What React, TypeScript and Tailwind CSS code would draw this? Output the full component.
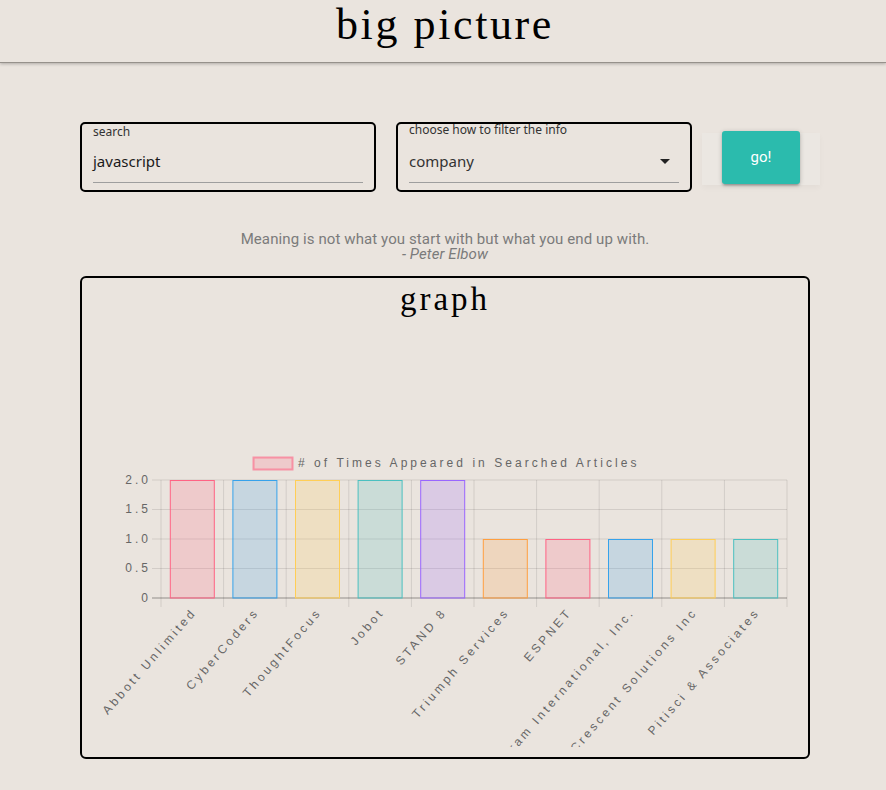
import React from "react";

const labels = [
  "Abbott Unlimited",
  "CyberCoders",
  "ThoughtFocus",
  "Jobot",
  "STAND 8",
  "Triumph Services",
  "ESPNET",
  "Sogram International, Inc.",
  "Crescent Solutions Inc",
  "Pitisci & Associates",
];
const values = [2, 2, 2, 2, 2, 1, 1, 1, 1, 1];
const colors = [
  [255, 99, 132],
  [54, 162, 235],
  [255, 206, 86],
  [75, 192, 192],
  [153, 102, 255],
  [255, 159, 64],
  [255, 99, 132],
  [54, 162, 235],
  [255, 206, 86],
  [75, 192, 192],
];

const X0 = 161;
const X1 = 787;
const CW = (X1 - X0) / 10;
const Y0 = 598;
const UNIT = 59;

function Chart() {
  const font = "'Liberation Sans', Arial, sans-serif";
  return (
    <svg width={726} height={417} viewBox="82 330 726 417" className="block">
      {/* legend */}
      <rect x={253.5} y={457.5} width={39} height={12} fill="rgba(255,99,132,0.2)" stroke="rgba(255,99,132,0.6)" strokeWidth={2} />
      <text x={298} y={463.5} fontSize={12} fill="#666" fontFamily={font} dominantBaseline="middle" style={{ letterSpacing: "3.05px" }}>
        # of Times Appeared in Searched Articles
      </text>
      {/* horizontal grid */}
      {[2, 1.5, 1, 0.5].map((v) => (
        <line key={v} x1={152} x2={X1} y1={Y0 - v * UNIT} y2={Y0 - v * UNIT} stroke="rgba(0,0,0,0.1)" strokeWidth={1} />
      ))}
      {/* vertical grid */}
      {Array.from({ length: 11 }).map((_, i) => (
        <line key={i} x1={X0 + i * CW} x2={X0 + i * CW} y1={480} y2={607} stroke="rgba(0,0,0,0.1)" strokeWidth={1} />
      ))}
      <line x1={152} x2={X1} y1={Y0} y2={Y0} stroke="rgba(0,0,0,0.25)" strokeWidth={1.5} />
      {/* y labels */}
      {[
        [2, "2.0"],
        [1.5, "1.5"],
        [1, "1.0"],
        [0.5, "0.5"],
        [0, "0"],
      ].map(([v, t]) => (
        <text key={t as string} x={151} y={Y0 - (v as number) * UNIT + 0.5} textAnchor="end" dominantBaseline="middle" fontSize={12} fill="#666" fontFamily={font} style={{ letterSpacing: "3px" }}>
          {t}
        </text>
      ))}
      {/* bars */}
      {values.map((v, i) => {
        const cx = X0 + CW * i + CW / 2;
        const [r, g, b] = colors[i];
        const top = Y0 - v * UNIT;
        return (
          <rect
            key={i}
            x={cx - 22}
            y={top + 0.5}
            width={44}
            height={Y0 - top - 0.5}
            fill={`rgba(${r},${g},${b},0.2)`}
            stroke={`rgb(${r},${g},${b})`}
            strokeWidth={1}
          />
        );
      })}
      {/* x labels */}
      {labels.map((l, i) => {
        const cx = X0 + CW * i + CW / 2;
        return (
          <text
            key={l}
            transform={`translate(${cx + 1} 612) rotate(-49)`}
            x={2}
            y={0}
            textAnchor="end"
            dominantBaseline="middle"
            fontSize={12}
            fill="#666"
            fontFamily={font}
            style={{ letterSpacing: "3px" }}
          >
            {l}
          </text>
        );
      })}
    </svg>
  );
}

export default function App() {
  return (
    <div className="min-h-[790px] w-full bg-[#eae4de] font-['Roboto',sans-serif]">
      <header className="h-[63px] border-b border-[#96918b] shadow-[0_1px_3px_rgba(0,0,0,0.25)] flex justify-center pt-[3px]">
        <h1 className="font-['Liberation_Serif',serif] text-[44px] leading-none tracking-[2.6px] text-black pl-[4px]">big picture</h1>
      </header>

      <div className="flex items-start pl-[80px] pt-[59px]">
        {/* search */}
        <div className="w-[296px] h-[70px] border-2 border-black rounded-[5px] px-[11px]">
          <div className="h-[16px] text-[12px] leading-[16px] text-[#333] font-['Noto_Sans',sans-serif]">search</div>
          <div className="h-[43px] border-b border-[#9e9e9e] flex items-center text-[15px] text-[#1a1a1a] font-['Noto_Sans',sans-serif]">
            javascript
          </div>
        </div>

        {/* select */}
        <div className="ml-[20px] w-[296px] h-[70px] border-2 border-black rounded-[5px] px-[11px]">
          <div className="h-[16px] text-[12px] leading-[12px] text-[#333] font-['Noto_Sans',sans-serif]">choose how to filter the info</div>
          <div className="h-[43px] border-b border-[#9e9e9e] flex items-center justify-between text-[15px] text-[#333] font-['Noto_Sans',sans-serif]">
            <span>company</span>
            <svg width="10" height="5" viewBox="0 0 10 5" className="mr-[9px]">
              <path d="M0 0 L10 0 L5 5 Z" fill="#222" />
            </svg>
          </div>
        </div>

        {/* button */}
        <div className="ml-[10px] mt-[11px] h-[52px] px-[20px] bg-[#ebe7e2] shadow-[0_3px_6px_rgba(0,0,0,0.03)]">
          <button className="-mt-[2px] w-[78px] h-[53px] rounded-[3px] bg-[#2bbbad] text-white text-[15px] font-normal font-['Roboto',sans-serif] shadow-[0_2px_2px_rgba(0,0,0,0.14),0_3px_1px_-2px_rgba(0,0,0,0.12),0_1px_5px_rgba(0,0,0,0.2)]">
            go!
          </button>
        </div>
      </div>

      <div className="mt-[40px] text-center text-[#7b7b7b] text-[15px] leading-[15px] tracking-[0.1px] font-['Roboto',sans-serif] pl-[4px]">
        <div>Meaning is not what you start with but what you end up with.</div>
        <div className="italic">- Peter Elbow</div>
      </div>

      <div className="ml-[80px] mt-[14px] w-[730px] h-[483px] border-2 border-black rounded-[6px]">
        <div className="h-[52px] pt-[5px] flex justify-center">
          <h2 className="font-['Liberation_Serif',serif] text-[33px] leading-none tracking-[3px] text-black">graph</h2>
        </div>
        <Chart />
      </div>
    </div>
  );
}
